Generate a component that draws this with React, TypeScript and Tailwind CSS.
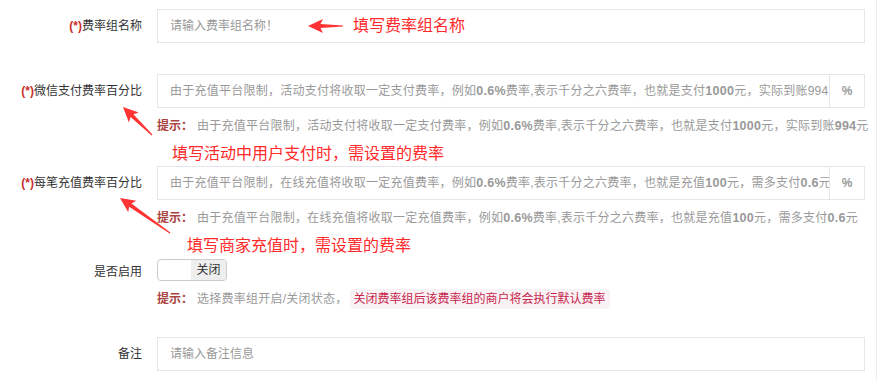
import React from 'react';

const cjk = { fontFamily: '"Liberation Sans", "Noto Sans CJK SC", sans-serif' };

// 红色标注箭头（尖端 -> 尾部）
function Arrow({ tip, tail }: { tip: [number, number]; tail: [number, number] }) {
  const dx = tail[0] - tip[0];
  const dy = tail[1] - tip[1];
  const len = Math.sqrt(dx * dx + dy * dy);
  const angle = (Math.atan2(dy, dx) * 180) / Math.PI;
  const pts = `0,0 15,-7 12.5,-2 ${len},-0.6 ${len},0.6 12.5,2 15,7`;
  return (
    <polygon
      points={pts}
      fill="#ff3333"
      transform={`translate(${tip[0]} ${tip[1]}) rotate(${angle})`}
    />
  );
}

function Label({ required, text }: { required?: boolean; text: string }) {
  return (
    <div className="w-[142px] shrink-0 text-right text-[12px] text-[#333]">
      {required && <span className="font-bold text-[#c9302c]">(*)</span>}
      {text}
    </div>
  );
}

function B({ children }: { children: React.ReactNode }) {
  return <b className="text-[12.5px] font-bold">{children}</b>;
}

function Hint({ children }: { children: React.ReactNode }) {
  return (
    <div className="ml-[157px] flex h-[18px] items-center whitespace-nowrap text-[12px] tracking-[0.25px] text-[#999]">
      <span className="mr-[4px] font-bold tracking-normal text-[#a94442]">提示：</span>
      {children}
    </div>
  );
}

function Note({ offset, children }: { offset: string; children: React.ReactNode }) {
  return (
    <div className={`${offset} h-[22px] text-[16px] leading-[22px] text-[#ff2a2a]`}>{children}</div>
  );
}

export default function App() {
  return (
    <div className="relative h-[381px] w-[877px] overflow-hidden border-r border-[#eeeeee] bg-white pt-[9px]" style={cjk}>
      {/* 费率组名称 */}
      <div className="flex items-center gap-[15px]">
        <Label required text="费率组名称" />
        <div className="flex h-[34px] w-[708px] items-center border border-[#e5e6e7] px-[12px] text-[12px] text-[#999]">
          请输入费率组名称！
        </div>
      </div>

      {/* 微信支付费率百分比 */}
      <div className="mt-[31px] flex items-center gap-[15px]">
        <Label required text="微信支付费率百分比" />
        <div className="flex h-[34px] w-[708px]">
          <div className="flex min-w-0 flex-1 items-center overflow-hidden whitespace-nowrap border border-[#e5e6e7] px-[12px] text-[12px] tracking-[0.25px] text-[#999]">
            由于充值平台限制，活动支付将收取一定支付费率，例如<B>0.6%</B>费率,表示千分之六费率，也就是支付<B>1000</B>元，实际到账994元
          </div>
          <div className="flex w-[35px] items-center justify-center border border-l-0 border-[#e5e6e7] text-[12px] font-bold text-[#999]">
            %
          </div>
        </div>
      </div>
      <div className="mt-[9px]">
        <Hint>
          由于充值平台限制，活动支付将收取一定支付费率，例如<B>0.6%</B>费率,表示千分之六费率，也就是支付<B>1000</B>元，实际到账<B>994</B>元
        </Hint>
      </div>
      <div className="mt-[8px]">
        <Note offset="ml-[172px]">填写活动中用户支付时，需设置的费率</Note>
      </div>

      {/* 每笔充值费率百分比 */}
      <div className="mt-[1px] flex items-center gap-[15px]">
        <Label required text="每笔充值费率百分比" />
        <div className="flex h-[34px] w-[708px]">
          <div className="flex min-w-0 flex-1 items-center overflow-hidden whitespace-nowrap border border-[#e5e6e7] px-[12px] text-[12px] tracking-[0.25px] text-[#999]">
            由于充值平台限制，在线充值将收取一定充值费率，例如<B>0.6%</B>费率,表示千分之六费率，也就是充值<B>100</B>元，需多支付<B>0.6</B>元
          </div>
          <div className="flex w-[35px] items-center justify-center border border-l-0 border-[#e5e6e7] text-[12px] font-bold text-[#999]">
            %
          </div>
        </div>
      </div>
      <div className="mt-[9px]">
        <Hint>
          由于充值平台限制，在线充值将收取一定充值费率，例如<B>0.6%</B>费率,表示千分之六费率，也就是充值<B>100</B>元，需多支付<B>0.6</B>元
        </Hint>
      </div>
      <div className="mt-[8px]">
        <Note offset="ml-[187px]">填写商家充值时，需设置的费率</Note>
      </div>

      {/* 是否启用 */}
      <div className="mt-[2px] flex items-end gap-[15px]">
        <div className="w-[142px] shrink-0 text-right text-[12px] leading-[18px] text-[#333]">是否启用</div>
        <div className="flex h-[22px] w-[70px] overflow-hidden rounded-[4px] border border-[#ccc] bg-white">
          <div className="flex-1" />
          <div className="flex w-[35px] items-center justify-center bg-[#eeeeee] text-[12px] text-[#333]">关闭</div>
        </div>
      </div>
      <div className="mt-[9px]">
        <Hint>
          选择费率组开启/关闭状态，
          <span className="ml-[2px] rounded-[4px] bg-[#f9f2f4] px-[4px] py-[1px] tracking-normal text-[#c7254e]">
            关闭费率组后该费率组的商户将会执行默认费率
          </span>
        </Hint>
      </div>

      {/* 备注 */}
      <div className="mt-[29px] flex items-center gap-[15px]">
        <Label text="备注" />
        <div className="flex h-[34px] w-[708px] items-center border border-[#e5e6e7] px-[12px] text-[12px] text-[#999]">
          请输入备注信息
        </div>
      </div>

      {/* 红色标注 */}
      <div className="absolute left-[353px] top-[15px] text-[16px] leading-[22px] text-[#ff2a2a]">填写费率组名称</div>
      <svg className="pointer-events-none absolute left-0 top-0" width="881" height="381">
        <Arrow tip={[308, 26]} tail={[343, 26]} />
        <Arrow tip={[123, 107]} tail={[152, 135]} />
        <Arrow tip={[120, 198]} tail={[170, 233]} />
      </svg>
    </div>
  );
}
